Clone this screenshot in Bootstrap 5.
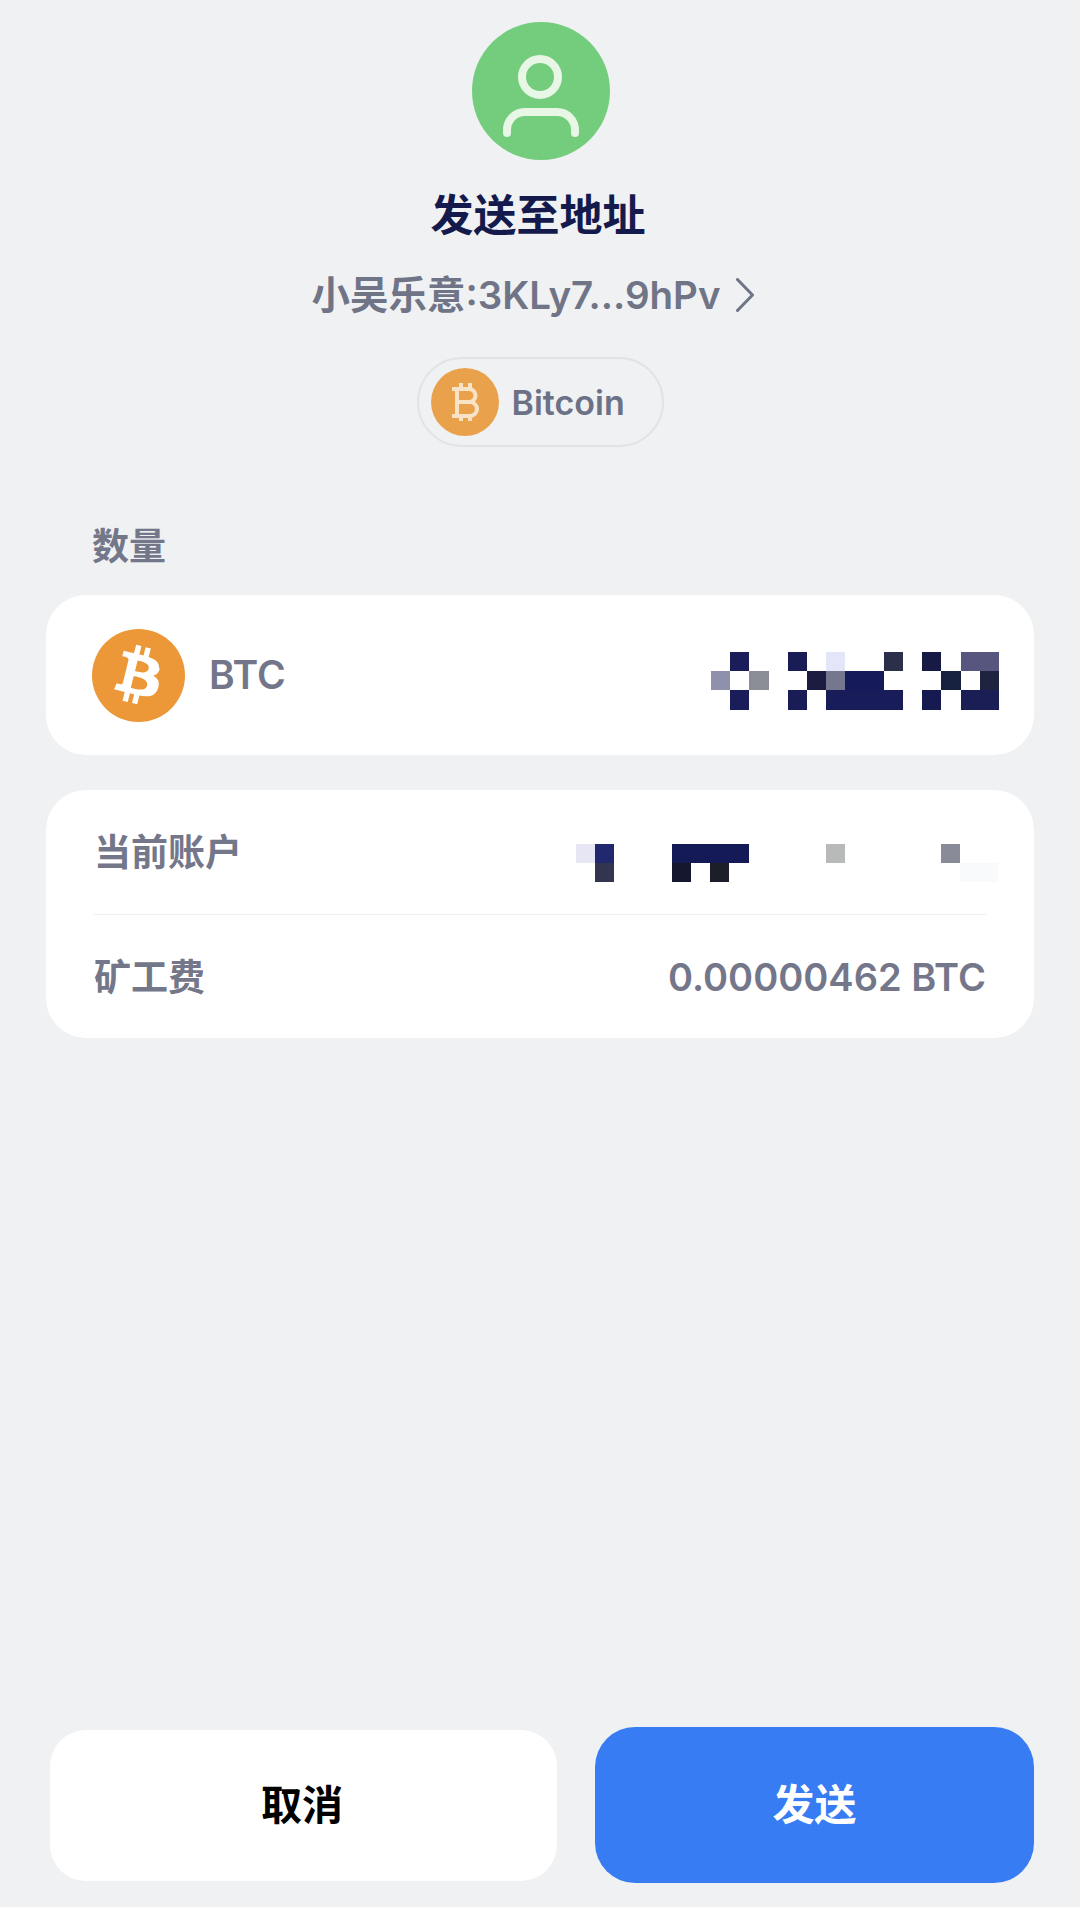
<!DOCTYPE html>
<html lang="zh-CN">
<head>
    <meta charset="UTF-8" />
    <title>发送至地址</title>
    <link href="https://cdn.jsdelivr.net/npm/bootstrap@5.3.2/dist/css/bootstrap.min.css" rel="stylesheet" />
    <style>
        body { background: #eff1f3; font-family: "Inter", "Noto Sans CJK SC", sans-serif; }
        .page-wrap { min-height: 1907px; padding: 22px 46px 24px 46px; }
        .avatar-icon { width: 138px; height: 138px; display: block; margin-left: 1px; }
        .send-title { margin: 30px 4px 0 0; font-size: 43px; line-height: 50px; font-weight: 700; color: #141a4c; }
        .addr-line { margin-top: 33px; padding-right: 15px; height: 44px; gap: 15px; font-size: 38.500px; line-height: 44px; font-weight: 600; color: #6f7486; }
        .coin-pill { margin-top: 40px; width: 247px; height: 90px; padding-left: 12px; gap: 13px; border: 2px solid #e1e3e7; border-radius: 45px; }
        .coin-pill span { font-size: 34px; font-weight: 600; color: #6c7186; }
        .amount-label { margin: 78px 0 26px 46px; font-size: 37px; line-height: 44px; font-weight: 600; color: #74778a; }
        .info-card { border: 0; border-radius: 40px; background: #fff; }
        .amount-row { height: 160px; padding: 0 35px 0 46px; gap: 24px; }
        .coin-name { font-size: 39px; font-weight: 600; color: #73768a; }
        .blur-one { width: 288px; height: 57.6px; margin-top: 12px; }
        .blur-two { width: 384px; height: 38px; margin: 20px 26px 0 0; overflow: visible; }
        .fee-card { margin-top: 35px; padding: 0 48px; }
        .fee-row { height: 124px; padding-top: 2px; color: #74778a; font-size: 37px; font-weight: 600; }
        .fee-row + .fee-row { border-top: 1px solid #eef0f2; }
        .fee-amount { font-size: 38px; }
        .action-row { margin-left: 4px; gap: 38px; }
        .action-btn { border: 0; line-height: 1; font-weight: 700; }
        .btn-cancel { width: 507px; height: 151px; padding-right: 15px; border-radius: 36px; background: #fff; color: #000; font-size: 41px; }
        .btn-cancel:hover { background: #fff; color: #000; }
        .btn-send { width: 439px; height: 156px; border-radius: 40px; background: #387cf3; color: #fff; font-size: 42px; }
        .btn-send:hover { background: #387cf3; color: #fff; }
    </style>
</head>
<body>
    <div class="page-wrap d-flex flex-column">
        <div class="d-flex flex-column align-items-center">
            <svg class="avatar-icon" viewBox="0 0 138 138">
                <circle cx="69" cy="69" r="69" fill="#73cd7c" />
                <circle cx="68" cy="55" r="18" fill="none" stroke="#e8f6e6" stroke-width="8" />
                <path d="M35 111v-3a18 18 0 0 1 18-18h32a18 18 0 0 1 18 18v3" fill="none" stroke="#e8f6e6" stroke-width="8" stroke-linecap="round" />
            </svg>
            <h1 class="send-title">发送至地址</h1>
            <div class="addr-line d-flex align-items-center">
                小吴乐意:3KLy7...9hPv
                <svg width="18" height="34" viewBox="0 0 18 34"><path d="M1.500 1.500 16.500 17 1.500 32.500" fill="none" stroke="#6f7486" stroke-width="3" stroke-linecap="round" stroke-linejoin="round" /></svg>
            </div>
            <div class="coin-pill d-flex align-items-center">
                <svg width="68" height="68" viewBox="0 0 68 68">
                    <circle cx="34" cy="34" r="34" fill="#e9a24b" />
                    <path d="M26 21h12a6.500 6.500 0 0 1 0 13H26zM26 34h13a7 7 0 0 1 0 14H26zM26 21v27M21 21h5M21 48h5M30 15v6M39 15v6M30 48v5M39 48v5" fill="none" stroke="#f8e3c6" stroke-width="4" />
                </svg>
                <span>Bitcoin</span>
            </div>
        </div>

        <div class="amount-label">数量</div>
        <div class="card info-card">
            <div class="amount-row d-flex align-items-center">
                <svg width="93" height="93" viewBox="0 0 64 64">
                    <circle cx="32" cy="32" r="32" fill="#ec9838" />
                    <path fill="#fff" d="M46.100 27.400c.6-4.300-2.600-6.600-7.100-8.100l1.500-5.900-3.600-.9-1.400 5.700c-.9-.2-1.900-.5-2.900-.7l1.400-5.800-3.600-.9-1.500 5.900c-.8-.2-1.500-.3-2.200-.5l-4.900-1.200-.9 3.800s2.600.6 2.600.6c1.400.4 1.700 1.300 1.600 2l-1.600 6.600-2.300 9.200c-.2.400-.6 1.100-1.600.8 0 0-2.600-.7-2.600-.7l-1.800 4.100 4.700 1.200c.9.2 1.700.4 2.600.7l-1.500 6 3.600.9 1.500-5.900c1 .3 1.900.5 2.900.7l-1.500 5.900 3.600.9 1.500-6c6.200 1.200 10.800.7 12.800-4.900 1.600-4.500-.1-7.100-3.300-8.800 2.300-.5 4.100-2.100 4.600-5.300zm-8.200 11.600c-1.100 4.500-8.700 2.100-11.200 1.400l2-8c2.500.6 10.400 1.800 9.200 6.600zm1.100-11.600c-1 4.100-7.300 2-9.400 1.500l1.800-7.300c2.100.5 8.700 1.500 7.600 5.800z" />
                </svg>
                <span class="coin-name">BTC</span>
                <svg class="blur-one ms-auto" viewBox="0 0 15 3" shape-rendering="crispEdges">
                    <rect x="1" y="0" width="1" height="1" fill="#1a1d5a" />
                    <rect x="4" y="0" width="1" height="1" fill="#1a1d55" />
                    <rect x="6" y="0" width="1" height="1" fill="#e3e6f8" />
                    <rect x="9" y="0" width="1" height="1" fill="#2b2f4a" />
                    <rect x="11" y="0" width="1" height="1" fill="#171a44" />
                    <rect x="13" y="0" width="2" height="1" fill="#56567f" />
                    <rect x="0" y="1" width="1" height="1" fill="#8f90ab" />
                    <rect x="2" y="1" width="1" height="1" fill="#8b8d96" />
                    <rect x="5" y="1" width="1" height="1" fill="#1c1c40" />
                    <rect x="6" y="1" width="1" height="1" fill="#75778e" />
                    <rect x="7" y="1" width="2" height="1" fill="#151a5a" />
                    <rect x="12" y="1" width="1" height="1" fill="#16203f" />
                    <rect x="14" y="1" width="1" height="1" fill="#1e2340" />
                    <rect x="1" y="2" width="1" height="1" fill="#1a1d5a" />
                    <rect x="4" y="2" width="1" height="1" fill="#1a1d55" />
                    <rect x="6" y="2" width="4" height="1" fill="#181c58" />
                    <rect x="11" y="2" width="1" height="1" fill="#171a50" />
                    <rect x="13" y="2" width="2" height="1" fill="#1b1e55" />
                </svg>
            </div>
        </div>

        <div class="card info-card fee-card">
            <div class="fee-row d-flex justify-content-between align-items-center">
                <span>当前账户</span>
                <svg class="blur-two" viewBox="0 0 384 38" shape-rendering="crispEdges">
                    <rect x="0" y="0" width="19" height="19" fill="#e6e6f5" />
                    <rect x="19" y="0" width="19" height="19" fill="#22286e" />
                    <rect x="19" y="19" width="19" height="19" fill="#33344f" />
                    <rect x="96" y="0" width="77" height="19" fill="#141a55" />
                    <rect x="96" y="19" width="19" height="19" fill="#15172f" />
                    <rect x="134" y="19" width="19" height="19" fill="#1c1f2a" />
                    <rect x="250" y="0" width="19" height="19" fill="#b8bab9" />
                    <rect x="365" y="0" width="19" height="19" fill="#8a8b98" />
                    <rect x="384" y="19" width="38" height="19" fill="#f8fafc" />
                </svg>
            </div>
            <div class="fee-row d-flex justify-content-between align-items-center">
                <span>矿工费</span>
                <span class="fee-amount">0.00000462 BTC</span>
            </div>
        </div>

        <div class="action-row d-flex align-items-center mt-auto">
            <button type="button" class="btn action-btn btn-cancel">取消</button>
            <button type="button" class="btn action-btn btn-send">发送</button>
        </div>
    </div>
    <script src="https://cdn.jsdelivr.net/npm/bootstrap@5.3.2/dist/js/bootstrap.bundle.min.js"></script>
</body>
</html>
